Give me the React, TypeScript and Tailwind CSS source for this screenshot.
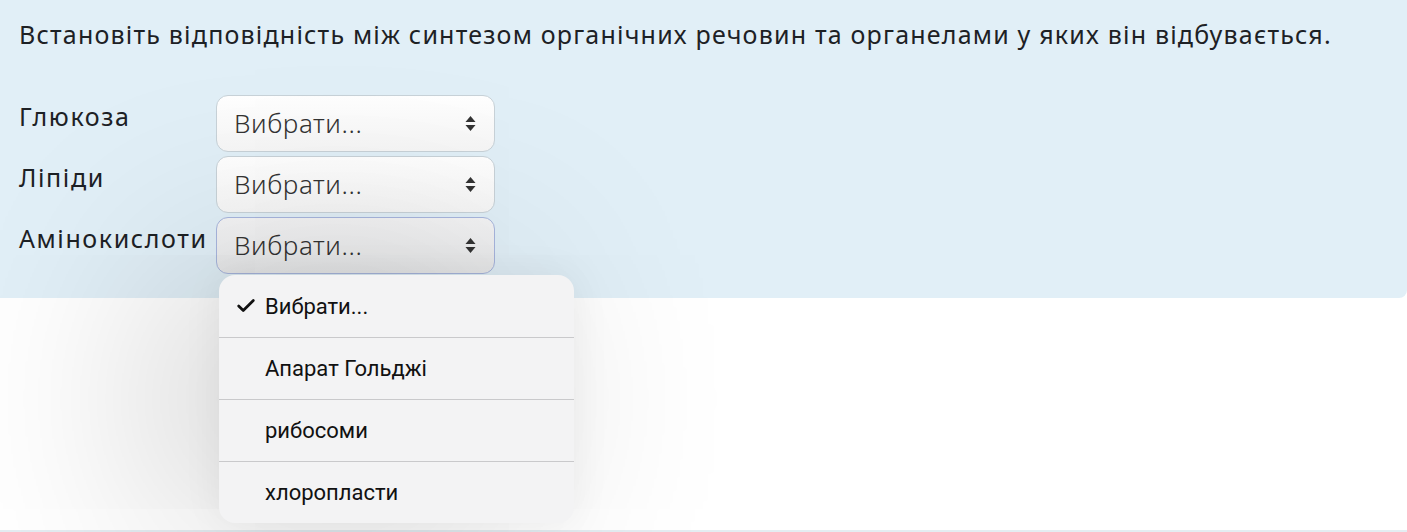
import { Check } from 'lucide-react';

const rows = ['Глюкоза', 'Ліпіди', 'Амінокислоти'];
const options = ['Вибрати...', 'Апарат Гольджі', 'рибосоми', 'хлоропласти'];

function Arrows() {
  return (
    <svg width="11" height="17" viewBox="0 0 11 17" className="shrink-0">
      <path d="M5.5 1 L10.5 7 H0.5 Z" fill="#333" />
      <path d="M5.5 16 L10.5 10 H0.5 Z" fill="#333" />
    </svg>
  );
}

export default function App() {
  return (
    <div className="relative h-[532px] w-full overflow-hidden bg-white" style={{ fontFamily: '"Noto Sans", sans-serif' }}>
      <div className="h-[298px] rounded-br-[8px] bg-[#e1eff7] pl-[19px] pt-[17px] text-[#1d2125]">
        <div className="text-[25px] leading-[34px] tracking-[1.2px]">
          Встановіть відповідність між синтезом органічних речовин та органелами у яких він відбувається.
        </div>
        <div className="mt-[44px] flex flex-col gap-[4px]">
          {rows.map((label, i) => (
            <div key={label} className="flex items-start">
              <div className="w-[197px] pt-[4px] text-[25px] leading-[34px] tracking-[1.6px]">{label}</div>
              <div
                className={`flex h-[57px] w-[279px] items-center justify-between rounded-[12px] border pl-[17px] pr-[18px] ${
                  i === 2
                    ? 'border-[#a8b6de] bg-gradient-to-b from-[#f4f4f5] to-[#e9eaeb]'
                    : 'border-[#c8d2d8] bg-gradient-to-b from-white to-[#f6f6f6]'
                }`}
              >
                <span className="text-[26px] font-light text-[#333] tracking-[0.6px]">Вибрати...</span>
                <Arrows />
              </div>
            </div>
          ))}
        </div>
      </div>

      <div className="absolute bottom-0 left-0 right-0 h-[2px] bg-[#e4edf2]" />

      <div
        className="absolute left-[219px] top-[275px] w-[355px] overflow-hidden rounded-[16px] bg-[#f3f3f4] shadow-[-60px_0_220px_rgba(0,0,0,0.2),0_0_40px_rgba(0,0,0,0.06)]"
        style={{ fontFamily: 'Roboto, "Liberation Sans", sans-serif' }}
      >
        {options.map((opt, i) => (
          <div
            key={opt}
            className={`flex h-[62px] items-center text-[22px] text-[#111] ${i > 0 ? 'border-t border-[#c9c9cb]' : ''}`}
          >
            <div className="flex w-[46px] justify-end pr-[8px]">
              {i === 0 && <Check size={22} strokeWidth={3} className="text-[#111]" />}
            </div>
            <span>{opt}</span>
          </div>
        ))}
      </div>
    </div>
  );
}
